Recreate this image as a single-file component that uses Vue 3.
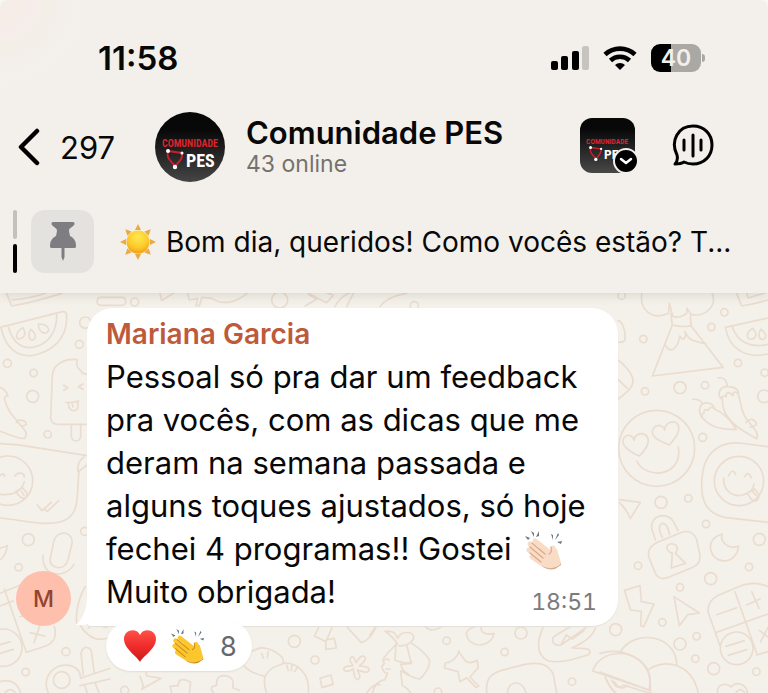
<script setup>
const chat = {
  unread: '297',
  title: 'Comunidade PES',
  status: '43 online',
  pinned: 'Bom dia, queridos! Como vocês estão? T...'
}

const bubbles = [
  [22, 211, 12], [101, 240, 11], [98, 310, 18], [143, 424, 11], [85, 740, 18], [56, 823, 11], [198, 1076, 12], [77, 1137, 11],
  [238, 154, 12], [256, 89, 17], [254, 715, 12], [404, 27, 12],
  [1865, 8, 11], [1930, 138, 11], [2134, 102, 11], [2173, 58, 11], [2214, 210, 11], [2294, 239, 11], [2292, 310, 19], [2040, 284, 18], [2115, 277, 11],
  [1935, 295, 11], [2108, 433, 12], [1983, 628, 18], [2065, 616, 11], [2118, 693, 11], [2278, 739, 18], [1914, 818, 11], [2247, 822, 11],
  [2132, 857, 18], [2040, 883, 11], [1987, 988, 11], [2090, 1030, 11], [2040, 1053, 18], [2086, 1097, 11], [2141, 1127, 18], [2269, 1136, 11],
  [1847, 1010, 18], [883, 1045, 18], [945, 1101, 12], [374, 1192, 12],
  [1340, 1043, 11], [1563, 1020, 18], [1514, 1077, 11], [1716, 1166, 11], [1314, 1196, 11],
  [839, 21, 24], [1243, 38, 12]
]
</script>

<template>
  <main class="screen">
    <svg class="defs" aria-hidden="true">
      <symbol id="clap" viewBox="0 0 40 40">
        <path d="m11 11 14 11M6 14l17 14M5 20l16 12M8 27l12 8M29 18l3 9" fill="none" stroke="var(--skin)" stroke-width="5" stroke-linecap="round" />
        <path d="M16 16c4 1 7 5 10 4l7-1 4 14-6 5c-5 2-11 0-15-4l-5-6z" fill="var(--skin)" />
        <path d="M18 36c8 4 15 2 19-3v2l-6 4c-5 1-10 0-13-3z" fill="var(--shade)" />
        <path d="m8 13 13 11M6 17l13 11M6 23l11 9M27 17c1 4 0 6-2 7" fill="none" stroke="var(--shade)" stroke-width="1.200" stroke-linecap="round" />
        <path d="m1 6 5 2-2 2zM7 1l3 2v4zM15 1v5l-3 1zM27 4l2 1v5zM34 3l1 2-4 5zM38 11l-1 3-4-2z" fill="#687784" />
      </symbol>
    </svg>

    <header class="top">
      <div class="statusbar">
        <time class="clock">11:58</time>
        <div class="indicators">
          <svg width="38" height="26" viewBox="0 0 38 26" aria-label="Sinal">
            <rect x="0" y="16" width="7" height="9" rx="2" /><rect x="10" y="11" width="7" height="14" rx="2" />
            <rect x="21" y="6" width="7" height="19" rx="2" /><rect x="31" y="1" width="7" height="24" rx="2" fill="#c7c4c0" />
          </svg>
          <svg width="34" height="26" viewBox="0 0 34 26" fill="none" stroke="#000" stroke-width="4.600" aria-label="Wi-Fi">
            <path d="M2 9.500a22 22 0 0 1 30 0" /><path d="M7.500 15.500a14 14 0 0 1 19 0" />
            <path d="M17 25l-5-5a7 7 0 0 1 10 0z" fill="#000" stroke="none" />
          </svg>
          <div class="battery"><span>40</span></div>
        </div>
      </div>

      <nav class="nav">
        <button class="back" aria-label="Voltar">
          <svg width="22" height="38" viewBox="0 0 22 38" fill="none" stroke="#000" stroke-width="4.500" stroke-linecap="round" stroke-linejoin="round"><path d="M19 3 3 19l16 16" /></svg>
          <span>{{ chat.unread }}</span>
        </button>
        <svg class="avatar" viewBox="0 0 70 70" aria-hidden="true">
          <text x="35" y="35" text-anchor="middle" class="logo-red">COMUNIDADE</text>
          <text x="31" y="55" class="logo-white">PES</text>
          <path d="m13 39 14 2M13 40c-2 6 3 9 7 14 4-4 8-7 7-13" fill="none" stroke="#c9202b" stroke-width="2" />
          <g fill="#fff"><circle cx="13" cy="39" r="2" /><circle cx="27" cy="41" r="1.500" /><circle cx="20" cy="55" r="2.200" /></g>
        </svg>
        <div class="heading">
          <h1>{{ chat.title }}</h1>
          <p>{{ chat.status }}</p>
        </div>
        <button class="switcher" aria-label="Trocar perfil">
          <svg class="tile" viewBox="-1 0 73 73">
            <text x="35" y="35" text-anchor="middle" class="logo-red">COMUNIDADE</text>
            <text x="31" y="55" class="logo-white">PES</text>
            <path d="m13 39 14 2M13 40c-2 6 3 9 7 14 4-4 8-7 7-13" fill="none" stroke="#c9202b" stroke-width="2" />
            <g fill="#fff"><circle cx="13" cy="39" r="2" /><circle cx="27" cy="41" r="1.500" /><circle cx="20" cy="55" r="2.200" /></g>
          </svg>
          <svg class="badge" viewBox="0 0 26 26"><circle cx="13" cy="13" r="12" stroke="#f3f0eb" stroke-width="2" /><path d="m8 11 5 4 5-4" fill="none" stroke="#fff" stroke-width="2.500" stroke-linecap="round" stroke-linejoin="round" /></svg>
        </button>
        <button class="voice" aria-label="Chat de voz">
          <svg width="42" height="42" viewBox="0 0 42 42" fill="none" stroke="#000" stroke-width="3" stroke-linecap="round" stroke-linejoin="round">
            <path d="M5 31C-2 17 6 2 21 2c11 0 19 8 19 19s-8 19-19 19c-4 0-7-1-9-2-3 2-6 2-9 2 2-2 3-5 2-9z" />
            <path d="M12 16v10M21 11v21M29 16v10" />
          </svg>
        </button>
      </nav>

      <a class="pinned" href="#mensagem">
        <span class="pages"><i></i><i class="on"></i></span>
        <span class="pinbox">
          <svg width="28" height="40" viewBox="0 0 28 40" fill="#7e7e82"><path d="M4 0h20c2 0 2 3 0 4-2 2-4 2-4 5l1 5c4 2 6 5 6 10 0 2-1 2-2 2H3c-1 0-2 0-2-2 0-5 2-8 6-10l1-5c0-3-2-3-4-5-2-1-2-4 0-4z" /><path d="M12.500 26h3v9l-1.500 4-1.500-4z" /></svg>
        </span>
        <svg class="sun" viewBox="0 0 36 36" aria-hidden="true">
          <g fill="#e9aa42"><path id="ray" d="m15 6 3-6 3 6z" /><use v-for="n in 7" :key="n" href="#ray" :transform="`rotate(${n * 45} 18 18)`" /></g>
          <circle cx="18" cy="18" r="11.500" fill="url(#sunFill)" />
          <radialGradient id="sunFill" cx=".5" cy=".3" r=".75"><stop offset="0" stop-color="#ffe94d" /><stop offset=".6" stop-color="#fdc92b" /><stop offset="1" stop-color="#ee9510" /></radialGradient>
        </svg>
        <span class="pintext">{{ chat.pinned }}</span>
      </a>
    </header>

    <section class="chat">
      <svg class="wallpaper" viewBox="0 0 2304 1200" preserveAspectRatio="xMidYMin slice" aria-hidden="true">
        <g transform="translate(0 -9)">
          <circle v-for="(b, i) in bubbles" :key="i" :cx="b[0]" :cy="b[1] + 9" :r="b[2]" />
          <path d="m20 10 15 38q60-10 150-38M35 30q60-5 100-20M0 112l190-48c10 1 10 8 10 20 0 60-40 100-100 112-50 8-85-25-97-84zM25 112c15 50 45 70 85 57 40-12 62-50 60-97" />
          <path d="M68 113c-12 6-20 18-18 29 5 8 18 5 23-5 3-8 0-18-5-24zM92 118c-6 10-8 24 0 31 9 4 15-4 14-12-2-9-8-15-14-19zM115 102c0 12 5 22 15 27 8 2 17-3 16-12-4-9-17-15-31-15z" />
          <path d="M152 385l5-130c3-35 40-50 75-46-6 16 3 29 10 32 3 10 10 12 20 10M152 385c2 12 10 18 24 18h90M214 403v35c0 20 28 20 28 0v-35M190 286l14 7-13 8M249 282l-14 8 14 8M198 337q20 2 38-4M205 338c0 18 8 25 20 24 10-3 10-15 8-27M217 343l2 8" />
          <path d="M0 292q15 5 24 25-12 0-10 12c10 45 45 65 65 100-2 20-5 18-20 15-20-5-45-15-60-21M49 398c2-12 28-10 30 5-8 6-13 5-19 3" />
          <path d="M0 460q18 3 50 4l212 33M0 684c60 5 130 25 180 12 65-17 48-80 57-150M262 524l-28 22q-4-30 18-45" />
          <circle cx="24" cy="572" r="74" /><path d="M0 557q12-12 14 2M45 558c8-14 28-10 28 3M0 613c40 4 62-6 73-38M46 605l22-12 12 15c5 15-10 22-20 12zM64 604l8 12" />
          <path d="m112 645 14 17 28-25M132 658l10 6 34-32M0 775l22-8c-3 22-9 35-22 42" />
          <path d="M151 805l10-50c8-38 60-32 55 5l-12 50c-10 37-60 25-53-5zM130 795c-10 60 60 78 92 28M0 910l85-35M13 897l66 190M0 948l40-15M60 980l80-30M80 1087l60-20q35-15 23-58M90 1028l45 10M120 1006l-18 52" />
          <circle cx="10" cy="1073" r="56" /><path d="m0 1064 30-9M0 1090l40-12M0 1175c30-10 55 5 62 35M15 1209q15-20 32 0" />
          <circle cx="185" cy="1170" r="25" /><path d="M145 1209c-22-50 20-92 67-82 25 8 30 25 30 38l88-30M240 1187l90-20M250 1155l-7-65c5-25 30-22 32 0l8 60M255 1188l7 21M285 1178l12 31M256 890c-20 30-30 80-26 110M240 1005c25 40 55 50 85 38M265 1015q20-30 36-7l20 5" />
        </g>
        <g transform="translate(0 -39)">
          <path d="M292 60q0-8 10-8h65q10 0 10 12t-10 12h-65q-12 0-10-16zM480 40l5 22 35-22M563 40l5 20 25-5-5 22h10l8-25 30 3c30 20 70 15 105-15M915 78l35-20-25-15M925 40l55 28 20-22-20-8M1005 80q15-30 45-42M1060 40l-20 40M1140 80q20-30 80-40" />
        </g>
        <g transform="translate(1800 -9)">
          <path d="M126 8c-10 50 30 85 80 62l2-30 10 38q16 10 42-8l1-15 12 18c42 10 80-25 63-65M213 73l4 32q28 8 56 2l-2-35M217 105l-60 153 212-26-96-125M197 166c15 30 38 5 42-28 8 15 22 10 16-14 9 28 30 30 62 37" />
          <path d="m410 10 15 38q35-5 79-18M440 8l4 16 60-18M504 84l-128 28c12 65 60 95 128 80M396 108c15 48 55 68 108 55M458 115c-15 8-22 25-10 32 18 4 28-15 10-32zM482 118c-8 15-7 30 7 31 15-6 8-22-7-31M54 92c15 0 25 40 20 60q-8 7-20 4M54 210c12 8 45 40 45 62s-22 38-45 56M54 268l28 27" />
          <circle cx="170" cy="475" r="114" /><path d="M118 498c-26-11-64-35-44-57 11-11 26-3 28 10 3-20 28-28 40-10 10 20-9 42-24 57zM208 465c-22-9-66-25-46-52 14-15 32-1 32 8 0-23 28-34 40-17 10 24-14 46-26 61zM110 513c30 60 140 45 125-42" />
          <path d="M354 264q25-5 28 25M361 325c-9-15-1-38 24-35 25 0 32 15 31 22-15-12-18-3-17 5-16-16-22-8-20 3q-12-4-18 5zM367 326c-3 60 50 92 103 120 9-17-12-35-29-57-22-28-15-50-27-77M438 397q20-20 32 5-5 8-20 9M278 328q20-2 29 12M307 384c-15-20-9-47 15-45 12 1 20 8 20 15q-14-5-17 7-14-7-13 9-8-2-5 14zM308 384c25 30 60 35 101 34-18-30-40-51-67-62" />
          <path d="M504 470l-85-11c-70-5-105 40-111 90-12 80 10 120 65 133l131 15" /><circle cx="417" cy="573" r="74" /><path d="M386 557q12-25 21-3M434 560q10-20 20 3M371 564c-2 40 30 60 60 50 18-5 30-18 31-32M441 610l23-13 13 17c0 20-15 25-24 12zM457 604l12 12" />
          <path d="m58 629 63 8-30 49q-12-30-33-48M166 749l-9-27c-8-25 8-45 33-45 24 2 30 15 44 45M187 742c-12-23-12-40 3-42 13 4 16 20 19 34M146 800c-3-25 8-34 30-45l70-28c24-8 38 6 44 22l9 42c4 25-6 35-25 43l-69 28c-23 10-36-2-41-17z" />
          <path d="M212 788c-25-15-5-32 11-25 14 7 9 20 3 27l31 30-43 14 3-45z" /><path d="M366 732c-25 8-35 20-35 40 6 55 78 55 85-4q-16 8-33-1c-18-10-20-24-17-35zM73 901l47-14 4 48 38 7-31 68-9-3 2-43-32-4zM222 920l76 49-35 5-25 33z" />
          <path d="M324 965c0-25 10-42 40-53l65-27q40-12 75 5M324 965l35 100M470 1095l34-10M405 905l65 185M346 1028l158-56M350 974l60-21M440 945l40-18M455 905l22 50M478 1021l26 20M504 1012l-22 43" /><circle cx="410" cy="1075" r="49" /><path d="m378 1069 55-17M385 1096l55-17" />
          <path d="M60 1087c45-75 170-50 170 37M0 1090c70-20 155 20 150 90l-3 20L0 1146M147 1138c50-35 130-15 148 72M15 1160q12 30 33 50M35 1170q18 35 35 15l80 25M353 1209c-5-30 30-30 40-18 15-18 46-10 50 18M408 1209q12-20 27 0" />
        </g>
        <g transform="translate(240 801)">
          <path d="m180 348 10 30-5 10 58-33-42-7-4-15M275 399l-5-20 24-2 4-15q15-8 34 5l-4 32M400 399q-15-20 10-23-2-35 30-28 25 5 18 35l20 8M490 315c0-30 25-45 55-52 45 5 75 35 62 47M490 315q20 25 65 34M555 349c15-30 42-33 60-40 40 0 75 35 70 88M555 349q-5 25 5 50M545 280l5 15M565 275l-3 18M620 315l5 17M636 312l-2 20M653 320l-9 15M718 198l-15 30 35 17 20-47M738 240l25-5 6 29-32 4zM720 355l33-10 6 28-33 10zM800 200l44 48q30-10 45-50M815 290c-14 12 4 20 3 28-14-1-34 2-24 14 12 5 18 0 26-5 1 14 6 40 17 29 8-8-4-19-5-26 12 4 35 12 35 1 2-13-18-11-29-14 11-8 25-22 14-28-11-4-17 9-24 19-5-8-6-21-13-18zM860 399q20-30 40-25" />
        </g>
        <g transform="translate(1110 921)">
          <path d="M165 80q20 20 50 0M0 105l20-28M320 78c-18 6-27 10-31 22 5 48 75 45 83 0q-22 6-36-5l-5-17M520 80c-20 45-22 85 15 103 45 8 80-8 118-18 15-10 5-20-15-20l-32-1c30-15 60-30 70-60M600 80l-49 30c-10 15 5 30 22 25l75-52M575 130l14-25 18 12 35-25" />
          <path d="M78 125c-20-30-50-35-20-30 12-3 20 8 25 20 12-25 45-20 48-5 0 15-22 30-45 27M78 130l-3 50q30 15 50 5M82 130c-20 20-35 32-44 50l5 10-8 10c3 15 12 20 18 19l-8 20q-30 5-38 40M110 135l14 55-32 3q5 20 24 30M125 130q40 25 53 50c5 20-20 50-28 57-25-3-42-15-57-25M92 215l5 42q15 5 25 22M45 180q5-6 13 0M48 207h12" />
          <path d="m265 154 22 30q15 9 35-3l3 22-25 28 26 27-8 5-28-30-20 12-6-30-41-11 3-15c20-2 36-18 42-35zM350 279c-3-45 10-55 45-68l70-18c55-10 72 5 85 30l10 56M413 279c0-40 48-40 55 0" />
          <path d="M668 213c20-65 130-75 165 0q10 25 8 65M668 213l170 58M708 235q10 28 28 44M733 245q18 30 40 12" />
        </g>
      </svg>

      <article id="mensagem" class="row">
        <span class="sender">M</span>
        <div class="bubble">
          <svg class="tail" viewBox="0 0 24 32" aria-hidden="true"><path d="M11 0c0 15-3 23-11 31 9 1 17-2 24-8z" fill="#fff" /></svg>
          <h2>Mariana Garcia</h2>
          <p>Pessoal só pra dar um feedback pra vocês, com as dicas que me deram na semana passada e alguns toques ajustados, só hoje fechei 4 programas!! Gostei <svg class="emoji light" role="img" aria-label="palmas"><use href="#clap" /></svg><br>Muito obrigada!</p>
          <time class="sent">18:51</time>
        </div>
      </article>
      <button class="reactions" aria-label="8 reações">
        <svg class="heart" viewBox="0 0 32 32" aria-hidden="true">
          <linearGradient id="heartFill" x2="0" y2="1"><stop offset="0" stop-color="#ff5148" /><stop offset=".5" stop-color="#f02c2c" /><stop offset="1" stop-color="#c91b18" /></linearGradient>
          <path d="M16 32C13 26 0 19 0 9 0 0 12-3 16 5c4-8 16-5 16 4 0 10-13 17-16 23z" fill="url(#heartFill)" />
        </svg>
        <svg class="emoji" aria-hidden="true"><use href="#clap" /></svg>
        <span>8</span>
      </button>
    </section>
  </main>
</template>

<style>
body { margin: 0; background: #fff; }
</style>

<style scoped>
* { box-sizing: border-box; }
.screen { min-height: 100vh; display: flex; flex-direction: column; font-family: Inter, "Liberation Sans", sans-serif; color: #080808; }
.defs { position: absolute; width: 0; height: 0; }
h1, h2, p { margin: 0; }
button { border: 0; padding: 0; background: none; font: inherit; color: inherit; }
svg { display: block; flex: none; }

.top { position: relative; z-index: 1; border-radius: 8px 8px 0 0; background: radial-gradient(circle at 0 0, #f6ece8, #f3f0eb 90px); box-shadow: 0 1px 12px rgba(80, 70, 55, .18); padding: 32px 32px 20px 0; }
.statusbar { display: flex; justify-content: space-between; align-items: center; height: 52px; padding: 0 30px 0 98px; }
.clock { font-size: 33px; font-weight: 600; }
.indicators { display: flex; align-items: center; gap: 14px; }
.battery { position: relative; width: 50px; height: 28px; border-radius: 9px; background: linear-gradient(90deg, #000 40%, #aaa8a4 40%); color: #f3f0eb; font-size: 23px; font-weight: 600; line-height: 28px; text-align: center; margin-right: 5px; }
.battery::after { content: ""; position: absolute; right: -4px; top: 10px; width: 3px; height: 8px; border-radius: 0 4px 4px 0; background: #aaa8a4; }

.nav { display: flex; align-items: center; height: 86px; margin-top: 20px; padding: 0 22px 0 18px; }
.back { display: flex; align-items: center; gap: 20px; width: 137px; font-size: 31px; }
.avatar { width: 70px; height: 70px; border-radius: 50%; background: linear-gradient(#080808 25%, #454545); }
.heading { flex: 1; min-width: 0; padding-left: 21px; }
h1 { font-size: 31px; line-height: 34px; font-weight: 600; white-space: nowrap; }
.heading p { font-size: 23px; line-height: 28px; color: #75726e; }
.switcher { position: relative; width: 55px; margin: 0 37px 4px 0; }
.voice { margin-bottom: 4px; }
.tile { width: 55px; height: 55px; border-radius: 12px; background: linear-gradient(#080808 20%, #484848); }
.badge { position: absolute; right: -4px; bottom: -1px; width: 26px; height: 26px; }
.logo-red { font: bold 10px "Liberation Sans Narrow", "Roboto Condensed", "Liberation Sans", sans-serif; fill: #d72630; }
.logo-white { font: bold 18px "Liberation Sans Narrow", "Roboto Condensed", "Liberation Sans", sans-serif; fill: #fff; }

.pinned { display: flex; align-items: center; height: 63px; margin-top: 20px; padding-left: 13px; color: inherit; text-decoration: none; }
.pages { display: grid; gap: 5px; width: 18px; }
.pages i { width: 4px; height: 29px; border-radius: 2px; background: #c3c1bd; }
.pages .on { background: #000; }
.pinbox { display: grid; place-items: center; width: 63px; height: 63px; border-radius: 14px; background: #e4e2de; }
.sun { width: 36px; height: 36px; margin: 0 10px 0 26px; }
.pintext { font-size: 28px; white-space: nowrap; }

.chat { position: relative; flex: 1; overflow: hidden; padding: 15px 16px 22px; background: #f4f1ea; }
.wallpaper { position: absolute; inset: 0; width: 100%; height: 100%; fill: none; stroke: #eadccf; stroke-width: 5; stroke-linejoin: round; stroke-linecap: round; }
.row { position: relative; display: flex; align-items: flex-end; gap: 16px; }
.sender { flex: none; width: 55px; height: 55px; border-radius: 50%; background: #ffbfad; color: #91442f; font-size: 23px; font-weight: 500; line-height: 56px; text-align: center; }
.bubble { position: relative; flex: 0 1 531px; padding: 6px 18px 13px 19px; border-radius: 26px 26px 26px 4px; background: #fff; box-shadow: 0 1px 1px #e4dfd7; }
.tail { position: absolute; left: -11px; bottom: 0; width: 24px; height: 32px; }
h2 { font-size: 28px; line-height: 41px; font-weight: 600; color: #bd5a3c; }
.bubble p { font-size: 31px; line-height: 43px; }
.emoji { --skin: #fbc72f; --shade: #d18a20; width: 36px; height: 36px; }
.light { --skin: #f9dcc5; --shade: #d9a98c; display: inline-block; vertical-align: -6px; width: 40px; height: 40px; margin: -4px 0 -4px 4px; }
.sent { position: absolute; right: 21px; bottom: 10px; font-size: 23px; line-height: 28px; font-variant-numeric: tabular-nums; color: #7b7b7b; }
.reactions { position: relative; display: flex; align-items: center; gap: 14px; height: 50px; margin: -5px 0 0 90px; padding: 0 15px 0 18px; border-radius: 25px; background: #fff; font-size: 27px; color: #686868; box-shadow: 0 1px 2px #e2dcd3; }
.heart { width: 32px; height: 32px; }
</style>
